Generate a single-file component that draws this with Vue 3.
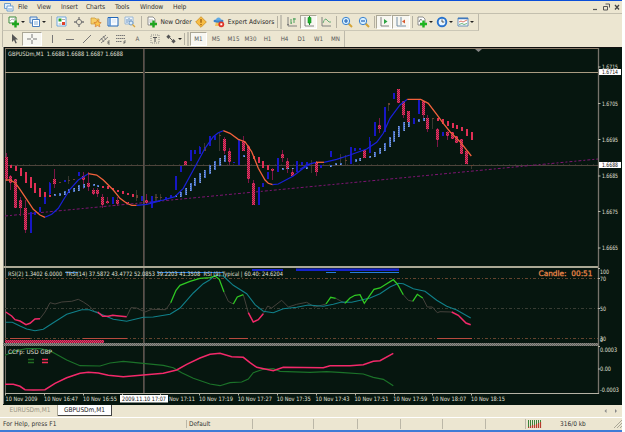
<script setup>
const menus = [
  ['File', 19], ['View', 24], ['Insert', 25], ['Charts', 29], ['Tools', 25], ['Window', 33], ['Help', 26],
]
const mainBar = [
  { w: 21, i: 'newchart', caret: 1 }, { w: 21, i: 'profiles', caret: 1 }, { w: 6, sep: 1 },
  { w: 16, i: 'market' }, { w: 17, i: 'nav' }, { w: 17, i: 'folder' }, { w: 17, i: 'terminal' }, { w: 17, i: 'tester' },
  { w: 6, sep: 1 }, { w: 16, i: 'order' }, { w: 32, t: 'New Order', cls: 'order' }, { w: 18, i: 'diamond' }, { w: 17, i: 'expert' },
  { w: 48, t: 'Expert Advisors', cls: 'expert' }, { w: 8, sep: 2 },
  { w: 17, i: 'bars' }, { w: 17, i: 'candles', on: 1 }, { w: 17, i: 'line' }, { w: 4, sep: 1 },
  { w: 17, i: 'zoomin' }, { w: 17, i: 'zoomout' }, { w: 4, sep: 1 },
  { w: 16, i: 'scroll', on: 1 }, { w: 18, i: 'shift', on: 1 }, { w: 4, sep: 1 },
  { w: 20, i: 'indicator', caret: 1 }, { w: 21, i: 'clock', caret: 1 }, { w: 23, i: 'template', caret: 1 },
]
const drawBar = [
  { w: 16, i: 'cursor' }, { w: 20, i: 'cross', on: 1 }, { w: 19, i: 'vline' }, { w: 17, i: 'hline' }, { w: 17, i: 'trend' },
  { w: 17, i: 'channel' }, { w: 17, i: 'fibo' }, { w: 17, t: 'A', cls: 'tf' }, { w: 17, i: 'label' }, { w: 19, i: 'arrows', caret: 1 },
  { w: 8, sep: 2 }, { w: 17, t: 'M1', cls: 'tf', on: 1 }, { w: 18, t: 'M5', cls: 'tf' }, { w: 17, t: 'M15', cls: 'tf' },
  { w: 17, t: 'M30', cls: 'tf' }, { w: 17, t: 'H1', cls: 'tf' }, { w: 17, t: 'H4', cls: 'tf' }, { w: 17, t: 'D1', cls: 'tf' },
  { w: 17, t: 'W1', cls: 'tf' }, { w: 17, t: 'MN', cls: 'tf' },
]
const bars = [mainBar, drawBar]

const icons = {
  newchart: '<path d="M1 1h7v6H1z" fill="#fff" stroke="#3a8a3a"/><path d="M2 5l2-2 2 1 1-2" fill="none" stroke="#888" stroke-width=".6"/><path d="M7.5 4.500v7M4 8h7" stroke="#1fa51f" stroke-width="2.4"/>',
  profiles: '<path d="M1 1h7v6H1z" fill="#dcebf8" stroke="#4a7fc0"/><path d="M3.500 3.500h7v7h-7z" fill="#fff" stroke="#4a7fc0"/><path d="M5 8h4M5 6h4" stroke="#5f97cf" stroke-width=".8"/>',
  market: '<path d="M1 1h9v9H1z" fill="#fff" stroke="#6da5dc"/><path d="M2.500 2.500h3v3h-3z" fill="#28a428"/><path d="M6 6h3v3H6z" fill="#e0412a"/><path d="M6 3.500h3M2.500 8h3" stroke="#999" stroke-width=".8"/>',
  nav: '<circle cx="6" cy="6" r="2.600" fill="none" stroke="#777"/><path d="M6 1v3M6 8v3M1 6h3M8 6h3" stroke="#777" stroke-width="1.300"/>',
  folder: '<path d="M1 2h4l1 1h3v5H1z" fill="#f6ce68" stroke="#c79430" stroke-width=".7"/><path d="M7.500 4l1.200 2.300 2.500.3-1.800 1.700.4 2.500-2.300-1.200-2.300 1.200.4-2.500L4 6.600l2.500-.3z" fill="#fbc64d" stroke="#cf6b25" stroke-width=".6"/>',
  terminal: '<path d="M1 1.500h10v8.500H1z" fill="#f7fbff" stroke="#2166b8"/><path d="M3 2v8" stroke="#4d8ed6" stroke-width="1.500"/><path d="M5 4h4M5 6h4" stroke="#c7d9ed" stroke-width=".7"/>',
  tester: '<path d="M1 1h8v7H1z" fill="#eef4fa" stroke="#88acd2" stroke-width=".8"/><path d="M3 3v4M5 2v4M7 3v3" stroke="#6792c0"/><circle cx="7" cy="7" r="2" fill="#dcedfa" stroke="#5689bd" stroke-width=".8"/><path d="M8.500 8.500l2.500 2.500" stroke="#d9a53a" stroke-width="1.300"/>',
  order: '<path d="M2 1h5l2 2v6H2z" fill="#fff" stroke="#777" stroke-width=".8"/><path d="M3 4h4M3 6h3" stroke="#999" stroke-width=".7"/><path d="M7.500 4.500v7M4 8h7" stroke="#1fa51f" stroke-width="2.400"/>',
  diamond: '<path d="M6 .7L11.300 6 6 11.300.7 6z" fill="#f7bd45" stroke="#cc8a1a" stroke-width=".8"/><path d="M6 3v3.800M6 8v1.300" stroke="#9c5c0b" stroke-width="1.300"/>',
  expert: '<path d="M3 6h6l1 4H2z" fill="#f1c35c"/><ellipse cx="5.500" cy="5" rx="5" ry="1.700" fill="#3c83cb"/><path d="M3 4.500q0-3 2.500-3T8 4.500z" fill="#60a9e4"/><circle cx="8.300" cy="8.300" r="2.900" fill="#dd3327"/><path d="M7.300 7.300h2v2h-2z" fill="#fff"/>',
  bars: '<path d="M2 1v9h9M1 8.500h2" fill="none" stroke="#777" stroke-width=".9"/><path d="M5 3v5M5 7h1M8 2v5M7 3h1M8 3h2" stroke="#3c9a4e" stroke-width=".9"/>',
  candles: '<path d="M2 1v9h9" fill="none" stroke="#777" stroke-width=".9"/><path d="M6.500 0v9" stroke="#158b20"/><path d="M5 1.500h3v5.500H5z" fill="#20b22d" stroke="#158b20" stroke-width=".6"/>',
  line: '<path d="M2 1v9h9" fill="none" stroke="#777" stroke-width=".9"/><path d="M3 7q2-6 4-3t4 2" fill="none" stroke="#59a66b" stroke-width=".9"/>',
  zoomin: '<path d="M7 7l4 4" stroke="#d6a537" stroke-width="2"/><circle cx="5" cy="5" r="3.700" fill="#d6efff" stroke="#3e83cd"/><path d="M3 5h4M5 3v4" stroke="#2465b7" stroke-width="1.200"/>',
  zoomout: '<path d="M7 7l4 4" stroke="#d6a537" stroke-width="2"/><circle cx="5" cy="5" r="3.700" fill="#d6efff" stroke="#3e83cd"/><path d="M3 5h4" stroke="#2465b7" stroke-width="1.200"/>',
  scroll: '<path d="M3 1v9h8" fill="none" stroke="#777" stroke-width=".9"/><path d="M6 3l3.500 2.500L6 8z" fill="#2ca342"/>',
  shift: '<path d="M2 1v9h9M6 1v8" fill="none" stroke="#64829c" stroke-width=".9"/><path d="M10 3.500L7 5.500 10 7.500z" fill="#d6572c"/>',
  indicator: '<path d="M2 1h5l2 2v6H2z" fill="#fff" stroke="#777" stroke-width=".8"/><path d="M3 6q1-4 3-2" fill="none" stroke="#555" stroke-width=".8"/><path d="M7.500 4.500v7M4 8h7" stroke="#1fb51f" stroke-width="2.400"/>',
  clock: '<circle cx="6" cy="6" r="4.300" fill="#e9f6ff" stroke="#2872cd" stroke-width="1.900"/><path d="M6 3.500V6h2.300" fill="none" stroke="#444" stroke-width=".9"/>',
  template: '<path d="M1 2h10v8H1z" fill="#fff" stroke="#5b87b2" stroke-width=".9"/><path d="M1 2.500h10" stroke="#4079bd" stroke-width="1.500"/><path d="M2 6l2-1 2 1 4-2" fill="none" stroke="#cf5440" stroke-width=".8"/><path d="M2 8.500l3-1 2 1 3-1" fill="none" stroke="#42a05c" stroke-width=".8"/>',
  cursor: '<path d="M4 1v8l2-2 1.500 3.500 1.300-.6L7.300 6.500H10z" fill="#555"/>',
  cross: '<path d="M6 1v4M6 7v4M1 6h4M7 6h4" stroke="#777"/>',
  vline: '<path d="M6.500 2v8" stroke="#777"/>',
  hline: '<path d="M2 6.500h8" stroke="#777"/>',
  trend: '<path d="M2 10l8-8" stroke="#777"/>',
  channel: '<path d="M1 8l7-6M3 10l7-6M3 5l3 4M5 3l3 4" stroke="#777" stroke-width=".9"/><path d="M10 8v3M10 8h2M10 9.500h1.500M10 11h2" stroke="#555" stroke-width=".7"/>',
  fibo: '<path d="M1 2.500h9M1 5.500h9M1 8.500h6" stroke="#777" stroke-dasharray="1.500 .5"/><path d="M9 8v3M9 8h2M9 9.500h1.500" stroke="#555" stroke-width=".7"/>',
  label: '<path d="M2 2h8v8H2z" fill="none" stroke="#777" stroke-width=".8" stroke-dasharray="1 1"/><path d="M4 4.500h4M6 4.500v4.500" stroke="#555"/>',
  arrows: '<path d="M3.500 1.500l2.200 2.200-2.200 2.200L1.300 3.700zM8.500 6l2.200 2.200-2.200 2.200-2.200-2.200z" fill="#555"/><path d="M5 5l2 2" stroke="#555"/>',
}

const at = (ox, oy) => (x, y) => [+(ox + x / 3).toFixed(1), +(oy + y / 3).toFixed(1)]
const path = (ox, oy, s) => {
  const f = at(ox, oy)
  return 'M' + s.split(' ').map(p => f(...p.split(',').map(Number)).join(' ')).join('L')
}
const rects = (ox, oy, s) => s.split(' ').map(r => {
  const [k, x, a, b, wa, wb] = r.split(/[:,]/)
  const [px, top] = at(ox, oy)(+x, +a)
  const [, bot] = at(ox, oy)(+x, +b)
  return { k, x: Math.floor(px), top: Math.round(top), h: Math.max(1, Math.round(bot) - Math.round(top)), w1: oy + (wa ?? a) / 3, w2: oy + (wb ?? b) / 3 }
})
const candles = [
  ...rects(0, 120, 'r:19,110,178,100,182 r:32,168,190,165,210 r:46,178,265 r:61,240,265,232,288 r:76,265,330,240,340 b:90,277,340 b:104,275,286 b:119,262,275 b:133,232,252,225,253 b:148,190,222,185,225 r:163,178,192,148,205 d:178,185,188 d:206,180,183,168,192 d:220,177,180 b:192,181,187 b:235,156,167 r:250,168,180,155,208 r:265,188,202,157,212 r:280,210,222,205,224 r:293,210,222,205,230 r:308,232,255,222,263 r:323,242,250,230,252 b:338,232,252 r:352,240,252,230,257 r:381,246,250 d:410,226,233,210,242 b:424,228,242 r:438,240,250,222,256 b:453,230,262 d:468,230,234,223,242'),
  ...rects(150, 110, 'b:3,258,293 d:17,262,265,252,273 d:32,262,265,252,273 b:46,262,270 b:61,255,263 b:76,197,240 b:90,167,187 r:105,154,165 b:120,121,154 b:134,121,131 b:149,112,131,107,131 d:164,110,122,98,122 b:179,78,108 b:194,78,90 d:208,76,79,70,122 r:222,88,122,80,132 r:237,122,155,115,165 b:250,155,160 b:266,88,165 r:281,94,122,78,124 r:295,108,208,105,218 r:310,220,284,210,286 b:324,232,284 b:338,220,230 b:352,187,207 r:367,176,182,174,210 b:382,145,187 r:396,132,143,120,155 r:411,152,178,145,188 r:426,187,198,178,200 b:440,154,187 b:455,156,163 b:470,156,163'),
  ...rects(300, 80, 'b:4,246,254 b:18,245,255 r:48,245,275,242,287 b:62,255,265 b:90,212,232 d:33,254,258,240,278 d:120,230,234,222,255 d:135,240,243,225,255 b:150,202,252 b:164,203,212 b:179,203,210 r:193,210,235 b:208,182,220,170,220 b:222,126,167 r:237,135,147,115,158 b:252,82,155 d:266,70,74,68,92 b:281,38,58 r:295,28,70 r:310,62,105,62,115 r:325,94,127 b:339,115,133 b:354,60,103 r:369,62,105,62,118 r:383,115,147,105,157 d:398,115,118,113,147 r:412,147,180,144,200 b:427,157,167 r:441,157,168,152,180 r:456,157,178 r:470,168,190 r:485,178,223 r:500,214,253,212,253 d:514,256,258,256,266'),
]
const dots = [
  ...rects(0, 120, 'p:32,136,144 p:46,138,152 p:61,145,168 p:75,155,190 p:90,172,205 p:104,188,220 p:119,203,230 p:134,217,230 p:148,225,231 l:163,222,228 l:178,218,227 l:192,213,225 l:206,207,220 l:220,203,215 l:235,196,212 l:250,192,203 l:280,193,197 l:293,196,200 p:308,198,204 p:323,199,206 p:338,203,210 p:352,210,216 p:367,214,221 p:381,219,226 p:396,223,230'),
  ...rects(150, 110, 'l:76,255,262 l:91,247,262 l:105,235,255 l:120,219,243 l:134,205,229 l:149,190,218 l:164,180,205 l:179,166,192 l:194,154,180 l:208,143,167 l:222,135,157 l:281,134,140 p:310,137,147 p:324,142,160 p:338,154,173 p:352,165,180 l:396,175,180 l:411,173,178 l:426,173,178 l:470,171,176'),
  ...rects(300, 80, 'l:18,260,264 l:90,255,262 l:105,250,256 l:121,248,255 l:165,238,246 l:179,234,243 l:208,227,233 l:222,217,230 l:237,204,222 l:252,189,212 l:267,172,202 l:281,154,187 l:296,137,172 l:310,125,152 l:325,127,140 l:354,117,127 l:369,114,122 p:411,114,122 p:426,118,132 p:441,124,138 p:456,130,144 p:470,136,148 p:485,142,154 p:500,147,167 p:514,156,180'),
]
const lines = [
  ['o', path(0, 120, '17,180 30,180 45,188 60,208 80,238 100,268 120,285 135,292')],
  ['b', path(0, 120, '135,292 155,283 175,265 190,240 210,208 235,180 265,161')],
  ['o', path(0, 120, '265,161 290,165 310,180 340,210 360,235 380,250 395,256 410,256')],
  ['b', path(0, 120, '410,256 440,253 480,243')],
  ['b', path(150, 110, '0,278 40,270 75,260 100,235 130,180 165,115 190,80 205,68 220,62')],
  ['o', path(150, 110, '220,62 240,70 265,88 285,95 305,125 325,175 345,210 355,220 368,224')],
  ['b', path(150, 110, '368,224 385,222 430,198 460,175 480,163')],
  ['b', path(300, 80, '0,268 25,253 48,247')],
  ['o', path(300, 80, '48,247 72,247')],
  ['b', path(300, 80, '72,247 110,238 150,225 200,207 230,187 250,160 270,115 300,75 322,58')],
  ['o', path(300, 80, '322,58 362,58 385,70 410,103 430,130 450,155 480,185 514,228')],
  ['d', path(0, 262, '120,170 135,150 150,122 165,126 185,120 215,118 235,112 250,120 268,132 283,148 293,150')],
  ['d', path(0, 262, '380,164 393,137 410,138 435,150 455,142 497,143 512,122')],
  ['d', path(200, 262, '72,90 85,118 100,126')],
  ['d', path(200, 262, '130,98 145,152')],
  ['d', path(200, 262, '190,155 203,132 215,138 245,115 265,135 290,127 320,121 345,135 378,126')],
  ['d', path(200, 262, '407,109 435,124')],
  ['d', path(400, 262, '10,98 25,115 38,118')],
  ['d', path(400, 262, '68,108 82,135 97,135 112,152 120,149 155,150')],
  ['t', path(0, 262, '17,181 37,181 60,192 80,201 105,206 130,202 160,182 200,157 245,143 268,143 300,155 340,172 380,178 430,166 460,165 510,157 540,138 580,93 610,65 630,53')],
  ['t', path(200, 262, '30,53 45,40 70,42 100,70 140,95 165,128 190,148 220,152 250,140 290,136 325,129 370,133 400,127 425,120 455,121 510,108 540,95 570,75 595,64 610,65 640,80 675,88 710,115 740,133 770,144 812,168')],
  ['p', path(0, 262, '17,150 35,162 45,173 60,177 78,188 90,184 105,171 120,170')],
  ['p', path(0, 262, '293,150 308,163 325,163 338,160 350,161 380,164')],
  ['p', path(200, 262, '145,152 160,180 175,173 190,155')],
  ['p', path(400, 262, '155,150 175,160 198,183 212,188')],
  ['g', path(0, 262, '512,122 528,85 540,70 570,58 600,49 630,47 645,42 658,52 672,90')],
  ['g', path(200, 262, '100,126 112,105 130,98')],
  ['g', path(200, 262, '378,126 392,106 407,109')],
  ['g', path(200, 262, '435,124 450,108 465,100 480,98 493,124 522,82 540,78 580,53 592,66 610,98')],
  ['g', path(400, 262, '38,118 52,97 68,108')],
  ['f', path(0, 340, '15,46 50,32 80,26 120,26 150,32 200,60 240,77 300,78 330,69 370,64 430,70 490,76 520,83 545,98 580,115 630,132 660,137 690,128 725,126 745,117 760,98 790,88 820,86 840,94 930,97 980,95 1030,98 1090,102 1120,112 1150,118 1180,137')],
  ['p', path(0, 340, '15,133 40,133 60,139 75,149 100,150 135,149 165,130 200,113 240,100 265,97 295,99 325,106 370,110 430,105 490,100 530,90 560,73 600,54 630,43 660,40 695,50 730,52 750,68 770,82 820,92 850,82 970,83 990,77 1050,77 1090,74 1120,64 1140,62 1180,40')],
]
const prices = [[67, '1.6715'], [103.5, '1.6705'], [139.5, '1.6695'], [176, '1.6685'], [211.5, '1.6675'], [248, '1.6665']]
const scale = [[272, '100', 9], [278.5, '70', 6], [308.5, '50', 6], [338.5, '30', 6], [340, '0', 3], [349.5, '0.0003', 17], [369, '0.00', 11], [389.5, '-0.0003', 19]]
const times = ['17:19', '17:27', '17:35', '17:43', '17:51', '17:59', '18:07', '18:15'].map((t, i) => [199 + i * 38.85, '10 Nov ' + t, 34])
times.push([5.500, '10 Nov 2009', 32], [44, '10 Nov 16:47', 34], [83, '10 Nov 16:55', 34], [169, 'Nov 17:11', 26])
const ticks = Array.from({ length: 13 }, (_, i) => Math.round(5 + i * 38.85))
const cells = [61, 44, 43, 42, 43, 40, 30]
</script>

<template>
  <div class="app">
    <div class="menu">
      <svg class="logo" width="10" height="10" viewBox="0 0 10 10"><path d="M.5 1.500h6v5h-6z" fill="#e3effb" stroke="#6d9fd2" /><path d="M3 4h6v5H3z" fill="#fff" stroke="#6d9fd2" /><path d="M4 7h4" stroke="#6d9fd2" /></svg>
      <span v-for="m in menus" :key="m[0]" :style="{ width: m[1] + 'px' }">{{ m[0] }}</span>
      <svg class="winbtn" width="32" height="12" viewBox="0 0 32 12"><path d="M3 8.500h4" stroke="#555" stroke-width="1.200" /><path d="M15.500 3h4v3.500M13.500 5.500h4v3.500h-4z" fill="none" stroke="#555" /><path d="M25 4l4 4.500M29 4l-4 4.500" stroke="#444" stroke-width="1.300" /></svg>
    </div>
    <div v-for="(b, n) in bars" :key="n" class="bar" :class="'bar' + n">
      <div v-for="(c, k) in b" :key="k" class="cell" :class="[c.cls, { on: c.on, sep: c.sep, dbl: c.sep === 2, drop: c.caret }]" :style="{ width: c.w + 'px' }">
        <svg v-if="c.i" width="12" height="12" viewBox="0 0 12 12" v-html="icons[c.i]" />
        <span v-if="c.t">{{ c.t }}</span>
        <i v-if="c.caret" class="caret" />
      </div>
    </div>

    <svg class="chart" width="622" height="358" viewBox="0 47 622 358">
      <defs>
        <pattern id="red" width="2" height="2" patternUnits="userSpaceOnUse"><path d="M0 0h2v2H0z" fill="#8c164c" /><path d="M0 0h1v1H0zM1 1h1v1H1z" fill="#f03a58" /></pattern>
        <pattern id="sky" width="2" height="2" patternUnits="userSpaceOnUse"><path d="M0 0h2v2H0z" fill="#426bc0" /><path d="M0 0h1v1H0z" fill="#89a3d8" /></pattern>
        <pattern id="band" width="2" height="2" patternUnits="userSpaceOnUse"><path d="M0 0h2v2H0z" fill="#8c8b85" /><path d="M0 0h1v1H0zM1 1h1v1H1z" fill="#5c5d5a" /></pattern>
      </defs>
      <path d="M3 47h619v358H3z" fill="#06160f" />
      <path d="M3 47.500h619" stroke="#101010" />
      <path d="M3.500 47v357" stroke="#8c8a84" />
      <path d="M5.500 48v346" stroke="#746e67" />
      <path d="M5 48.500h593" stroke="#8d7d6b" />
      <g shape-rendering="crispEdges">
        <path d="M5 165.500h593" stroke="#4d443b" />
        <path d="M5 164.500h593" stroke="#273027" stroke-dasharray="1 5" />
        <path d="M5 72.500h593" stroke="#a99c82" />
        <path d="M5 278.500h593M5 338.500h593" stroke="#66442f" stroke-dasharray="3 2 1 2" />
        <path d="M5 308.500h593" stroke="#3a3d34" stroke-dasharray="3 2 1 2" />
        <path d="M143.500 49v344" stroke="#5c5148" /><path d="M144.500 49v344" stroke="#3f4240" />
      </g>
      <path d="M5 216L598 159" stroke="#7e1472" stroke-dasharray="3 2 2 2" />
      <g shape-rendering="crispEdges">
        <g v-for="(c, k) in candles" :key="k">
          <path :d="`M${c.x + .5} ${c.w1}V${c.w2}`" :class="'w' + c.k" />
          <rect :x="c.k === 'r' ? c.x - 1 : c.x" :y="c.top" :width="c.k === 'r' ? 3 : 2" :height="c.h" :class="'c' + c.k" />
        </g>
        <rect v-for="(c, k) in dots" :key="'d' + k" :x="c.x" :y="c.top" width="2" :height="c.h" :class="'c' + c.k" />
      </g>
      <path d="M475 49h7l-3.500 3z" fill="#888" />

      <path d="M3 266h595v2H3z" fill="#aaa895" />
      <path d="M3 343h595v3H3z" fill="url(#band)" />
      <path d="M5 340h99v3H5z" fill="url(#red)" />
      <path d="M252 269h31v2h-31zM296 268.500h103v2.500H296z" fill="#1623c9" />
      <path d="M65 272.500h13M157 272.500h66M326 272.500h10M350 272.500h49" stroke="#267bdc" />
      <path d="M10 338.500h20M83 338.500h44M229 338.500h19M437 338.500h35" stroke="#b84a3e" />
      <path v-for="(l, k) in lines" :key="k" :d="l[1]" :class="'l' + l[0]" fill="none" />
      <path d="M28 359.500h6M28 362.500h6" stroke="#236d23" stroke-width="1.500" /><path d="M42 359.500h6M42 362.500h6" stroke="#f22d55" stroke-width="1.500" />

      <path d="M598.500 48v346" stroke="#77746c" stroke-width="1.300" />
      <path d="M5 393.500h594" stroke="#b5b3a5" />
      <path v-for="t in ticks" :key="t" :d="`M${t + .5} 393v2.500`" stroke="#b5b3a5" />
      <path v-for="p in prices" :key="p[1]" :d="`M598 ${p[0]}h2.500`" stroke="#b5b3a5" />
      <path d="M598 268.500h2M598 346.500h2M598 369h2M598 278.500h2M598 308.500h2" stroke="#b5b3a5" />
      <g class="txt">
        <text x="8" y="55.800" textLength="115" lengthAdjust="spacingAndGlyphs">GBPUSDm,M1&#160; 1.6688 1.6688 1.6687 1.6688</text>
        <text x="8" y="276" textLength="275" lengthAdjust="spacingAndGlyphs">RSI(2) 1.3402 6.0000&#160; TRSI(14) 37.5872 43.4772 52.0853 39.2203 41.3508&#160; RSI (9) Typical | 60.40: 24.6204</text>
        <text x="8" y="353.500" textLength="44" lengthAdjust="spacingAndGlyphs">CCFp: USD GBP</text>
        <text v-for="p in prices" :key="p[1]" x="602" :y="p[0] + 2.200" textLength="16" lengthAdjust="spacingAndGlyphs">{{ p[1] }}</text>
        <text v-for="s in scale" :key="s[1]" x="600" :y="s[0] + 2.200" :textLength="s[2]" lengthAdjust="spacingAndGlyphs">{{ s[1] }}</text>
        <text v-for="t in times" :key="t[1]" :x="t[0]" y="401" :textLength="t[2]" lengthAdjust="spacingAndGlyphs">{{ t[1] }}</text>
      </g>
      <path d="M599 69h22v6h-22zM599 162h22v6h-22zM120 395h48v7.500h-48z" fill="#fff" />
      <g class="txt inv">
        <text x="602" y="74.200" textLength="16" lengthAdjust="spacingAndGlyphs">1.6714</text>
        <text x="602" y="167.200" textLength="16" lengthAdjust="spacingAndGlyphs">1.6688</text>
        <text x="122" y="401" textLength="44" lengthAdjust="spacingAndGlyphs">2009.11.10 17:07</text>
      </g>
      <text class="candle" x="538.500" y="276" textLength="54" lengthAdjust="spacingAndGlyphs">Candle:&#160; 00:51</text>
    </svg>

    <div class="tabs">
      <span class="tab">EURUSDm,M1</span><span class="tab active">GBPUSDm,M1</span>
      <svg width="18" height="8" viewBox="0 0 18 8"><path d="M4.500 2v4L2.500 4zM13 2v4l2-2z" fill="#888" /></svg>
    </div>
    <div class="status">
      <span class="help">For Help, press F1</span>
      <span class="profile">Default</span>
      <span v-for="(c, k) in cells" :key="k" class="slot" :style="{ width: c + 'px' }" />
      <svg class="signal" width="15" height="8" viewBox="0 0 15 8"><path d="M.5 0v7M2.500 0v7M4.500 0v6M6.500 0v5M8.500 0v4M10.500 0v3M12.500 0v2" stroke="#398339" /><path d="M.5 7v1M2.500 6v2M4.500 5v3M6.500 5v3M8.500 4v4M10.500 3v5M12.500 2v6" stroke="#b63b2d" stroke-width="1.200" /></svg>
      <span class="traffic">316/0 kb</span>
      <svg class="grip" width="8" height="8" viewBox="0 0 8 8"><path d="M0 8l8-8M3 8l5-5M6 8l2-2" stroke="#aaa797" /></svg>
    </div>
  </div>
</template>

<style>
body { background: #fff; overflow: hidden; }
</style>
<style scoped>
.app {
  width: 622px; height: 432px; box-sizing: border-box; border-top: 1px solid #0a4ed8; border-bottom: 2px solid #3f7bd6;
  display: flex; flex-direction: column; font: 6.5px/8px "DejaVu Sans Condensed", "DejaVu Sans", sans-serif; color: #333;
  background: #ece6d1; overflow: hidden;
}
.menu { height: 12px; display: flex; align-items: center; padding-left: 4px; border-bottom: 1px solid #c3bfae; flex: none; font-size: 6.7px; letter-spacing: -.1px; }
.menu span { flex: none; }
.logo { margin-right: 4px; flex: none; }
.winbtn { margin-left: auto; margin-right: 0; }
.bar { box-sizing: border-box; display: flex; align-items: stretch; align-self: flex-start; margin-left: 2px; padding-left: 3px; border-left: 1px solid #bdb9aa; border-right: 1px solid #bdb9aa; flex: none; }
.bar0 { height: 17px; border-bottom: 1px solid #cbc7b6; }
.bar1 { height: 16px; }
.cell { box-sizing: border-box; display: flex; align-items: center; justify-content: center; flex: none; white-space: nowrap; }
.cell svg { flex: none; }
.drop { justify-content: flex-start; padding-left: 2px; gap: 1px; }
.on { background: #f8f7f1; border: 1px solid; border-color: #aba796 #fff #fff #aba796; margin: 1px 0; }
.sep::before { content: ""; width: 1px; height: 12px; background: #b5b1a2; }
.dbl { gap: 2px; }
.dbl::after { content: ""; width: 2px; height: 14px; background: #c5c1b2; }
.caret { border: 2px solid transparent; border-top-color: #222; border-bottom: 0; width: 0; height: 0; flex: none; }
.order, .expert { color: #222; }
.expert { letter-spacing: .05px; }
.tf { font-size: 6.2px; color: #555; }
.chart { flex: none; display: block; }
.cr { fill: url(#red); } .cb { fill: #1717c4; } .cd { fill: #68412f; } .cl { fill: url(#sky); } .cp { fill: #e02f55; }
.wr { stroke: #7c1546; } .wb { stroke: #1717b4; } .wd { stroke: #38372f; }
.lo { stroke: #f2623c; stroke-width: 1.3; } .lb { stroke: #1920d8; stroke-width: 1.2; } .ld { stroke: #44413b; } .lt { stroke: #10808a; stroke-width: 1.1; }
.lp { stroke: #f3296a; stroke-width: 1.5; } .lg { stroke: #2fc823; stroke-width: 1.3; } .lf { stroke: #1b7229; stroke-width: 1.2; }
.txt { font: 6px "DejaVu Sans Condensed", "DejaVu Sans", sans-serif; fill: #e0e0da; }
.inv { fill: #111; }
.candle { font: 7.5px "DejaVu Sans", sans-serif; fill: #f08a4c; stroke: #f08a4c; stroke-width: .25px; }
.tabs { height: 12px; flex: none; display: flex; align-items: flex-start; padding-left: 3px; border-bottom: 1px solid #fff; }
.tab { box-sizing: border-box; height: 11px; width: 55px; line-height: 11px; text-align: center; color: #999585; border-right: 1px solid #aaa797; }
.tab.active { width: 54px; background: #fff; color: #222; border-right: 1px solid #444; border-bottom: 1px solid #444; }
.tabs svg { margin: 2px 2px 0 auto; }
.status { flex: 1; display: flex; align-items: center; padding-left: 3px; white-space: nowrap; }
.status span { flex: none; }
.help { width: 183px; letter-spacing: .05px; }
.profile { width: 66px; box-sizing: border-box; border-left: 1px solid #bbb7a7; padding-left: 2px; }
.slot { box-sizing: border-box; height: 10px; border-left: 1px solid #bbb7a7; }
.signal { margin-left: -27px; flex: none; }
.traffic { margin-left: 17px; }
.grip { margin-left: auto; }
</style>
